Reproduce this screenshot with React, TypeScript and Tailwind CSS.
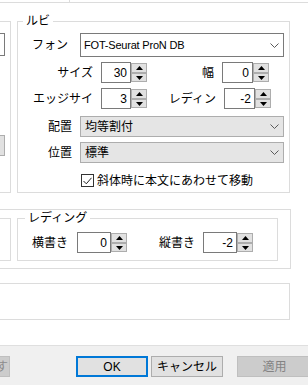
import React from 'react';

const LINE = 'border-[#dcdcdc]';

function Chevron() {
  return (
    <svg width="9" height="5" viewBox="0 0 9 5" className="shrink-0">
      <path d="M0.5 0.5 L4.5 4.5 L8.5 0.5" fill="none" stroke="#5a5a5a" strokeWidth="1" />
    </svg>
  );
}

function Arrow({ up }: { up?: boolean }) {
  return (
    <svg width="7" height="4" viewBox="0 0 7 4">
      {up ? <path d="M0 4 L3.5 0 L7 4 Z" fill="#000" /> : <path d="M0 0 L3.5 4 L7 0 Z" fill="#000" />}
    </svg>
  );
}

function Spin({ value, inputW }: { value: string; inputW: string }) {
  return (
    <div className="flex h-[21px] shrink-0">
      <div className={`flex h-[21px] items-center justify-end border border-[#7a7a7a] bg-white pr-[3px] ${inputW}`}>
        {value}
      </div>
      <div className="flex h-[21px] w-[16px] flex-col py-px">
        <div className="flex h-[10px] items-center justify-center border border-[#adadad] bg-[#e1e1e1]">
          <Arrow up />
        </div>
        <div className="flex h-[9px] items-center justify-center border border-[#adadad] bg-[#e1e1e1]">
          <Arrow />
        </div>
      </div>
    </div>
  );
}

function Select({ value, gray }: { value: string; gray?: boolean }) {
  return (
    <div
      className={
        gray
          ? 'flex h-[21px] w-[204px] shrink-0 items-center justify-between border border-[#adadad] bg-[#e5e5e5] pl-[4px] pr-[4px]'
          : 'flex h-[24px] w-[204px] shrink-0 items-center justify-between border border-[#7a7a7a] bg-white pl-[3px] pr-[4px]'
      }
    >
      <span className={gray ? '' : "font-['Liberation_Sans',sans-serif] text-[11px] tracking-[-0.2px]"}>{value}</span>
      <Chevron />
    </div>
  );
}

function Legend({ children, left }: { children: React.ReactNode; left: string }) {
  return (
    <span className={`absolute top-[-8px] bg-white px-[3px] leading-[14px] ${left}`}>{children}</span>
  );
}

export default function App() {
  return (
    <div className="flex h-[385px] w-[308px] flex-col overflow-hidden bg-white font-['Liberation_Sans','Noto_Sans_CJK_JP',sans-serif] text-[12px] leading-[14px] text-black">
      {/* edge of the panel above */}
      <div className={`flex h-[3px] shrink-0 border-b ${LINE}`}>
        <div className="ml-[69px] h-[2px] w-px bg-[#dcdcdc]" />
      </div>

      <div className="mt-[18px] flex shrink-0 gap-[6px]">
        <div className={`-ml-[30px] flex h-[172px] w-[41px] shrink-0 flex-col items-end border pr-[5px] pt-[11px] ${LINE}`}>
          <div className="h-[23px] w-[30px] border border-[#7a7a7a] bg-white" />
          <div className="mt-[79px] h-[21px] w-[30px] border border-[#adadad] bg-[#e1e1e1]" />
        </div>

        <div className={`relative flex h-[172px] w-[273px] shrink-0 flex-col border pt-[11px] ${LINE}`}>
          <Legend left="left-[5px]">ルビ</Legend>

          <div className="flex h-[24px] items-center pl-[14px]">
            <span className="w-[48px]">フォン</span>
            <Select value="FOT-Seurat ProN DB" />
          </div>

          <div className="mt-[5px] flex h-[21px] items-center">
            <span className="w-[75px] text-right">サイズ</span>
            <div className="ml-[8px]"><Spin value="30" inputW="w-[30px]" /></div>
            <span className="w-[67px] text-right">幅</span>
            <div className="ml-[8px]"><Spin value="0" inputW="w-[31px]" /></div>
          </div>

          <div className="mt-[5px] flex h-[21px] items-center">
            <span className="w-[75px] text-right">エッジサイ</span>
            <div className="ml-[8px]"><Spin value="3" inputW="w-[30px]" /></div>
            <span className="w-[69px] text-right">レディン</span>
            <div className="ml-[8px]"><Spin value="-2" inputW="w-[31px]" /></div>
          </div>

          <div className="mt-[7px] flex h-[21px] items-center">
            <span className="w-[54px] text-right">配置</span>
            <div className="ml-[8px]"><Select value="均等割付" gray /></div>
          </div>

          <div className="mt-[5px] flex h-[21px] items-center">
            <span className="w-[54px] text-right">位置</span>
            <div className="ml-[8px]"><Select value="標準" gray /></div>
          </div>

          <div className="mt-[11px] flex h-[13px] items-center pl-[63px]">
            <div className="flex h-[13px] w-[13px] shrink-0 items-center justify-center border border-[#333333] bg-white">
              <svg width="9" height="8" viewBox="0 0 9 8">
                <path d="M0.5 4 L3.3 6.8 L8.5 0.8" fill="none" stroke="#222" strokeWidth="1" />
              </svg>
            </div>
            <span className="ml-[3px] whitespace-nowrap">斜体時に本文にあわせて移動</span>
          </div>
        </div>
      </div>

      <div className={`-ml-[30px] mt-[16px] flex h-[60px] w-[321px] shrink-0 gap-[6px] border pt-[8px] ${LINE}`}>
        <div className={`h-[43px] w-[40px] shrink-0 border ${LINE}`} />
        <div className={`relative h-[43px] w-[261px] shrink-0 border pt-[13px] ${LINE}`}>
          <Legend left="left-[7px]">レディング</Legend>
          <div className="flex h-[21px] items-center pl-[14px]">
            <span className="w-[45px]">横書き</span>
            <Spin value="0" inputW="w-[34px]" />
            <span className="ml-[32px] w-[44px]">縦書き</span>
            <Spin value="-2" inputW="w-[34px]" />
          </div>
        </div>
      </div>

      <div className={`-ml-[30px] mt-[14px] h-[37px] w-[320px] shrink-0 border ${LINE}`} />

      <div className="mt-auto flex h-[40px] shrink-0 items-start border-t border-[#dfdfdf] bg-[#f0f0f0] pt-[10px]">
        <button className="-ml-[40px] flex h-[21px] w-[50px] shrink-0 items-center justify-end border border-[#bfbfbf] bg-[#cccccc] pr-[1px] text-[#8d8d8d]">
          す
        </button>
        <button className="ml-[66px] flex h-[21px] w-[72px] shrink-0 items-center justify-center border-2 border-[#0078d7] bg-[#e1e1e1]">
          OK
        </button>
        <button className="ml-[3px] flex h-[21px] w-[72px] shrink-0 items-center justify-center border border-[#adadad] bg-[#e1e1e1]">
          キャンセル
        </button>
        <button className="ml-[14px] flex h-[21px] w-[75px] shrink-0 items-center justify-center border border-[#bfbfbf] bg-[#cccccc] text-[#838383]">
          適用
        </button>
      </div>
    </div>
  );
}
